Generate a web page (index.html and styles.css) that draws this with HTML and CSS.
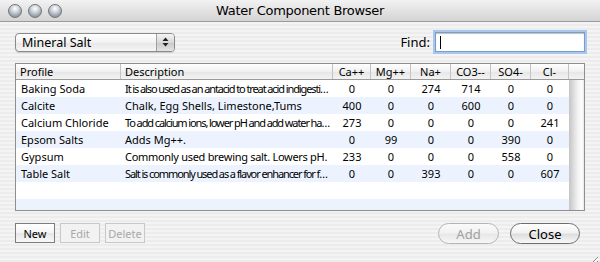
FILE: index.html
```html
<!DOCTYPE html>
<html>
<head>
<meta charset="utf-8">
<link rel="stylesheet" href="styles.css">
</head>
<body>
<div class="window">
  <div class="titlebar">
    <div class="lights">
      <span class="light"></span><span class="light"></span><span class="light"></span>
    </div>
    <div class="title">Water Component Browser</div>
  </div>
  <div class="content">
    <div class="toolbar">
      <div class="popup">
        <span class="popup-label">Mineral Salt</span>
        <span class="popup-arrows">
          <svg width="7" height="10" viewBox="0 0 7 10"><path d="M3.5 0.5 L6.5 4 H0.5 Z M3.5 9.5 L6.5 6 H0.5 Z" fill="#222"/></svg>
        </span>
      </div>
      <div class="find">
        <span class="find-label">Find:</span>
        <div class="find-input"><span class="caret"></span></div>
      </div>
    </div>
    <div class="table">
      <div class="thead">
        <div class="th c-prof">Profile</div>
        <div class="th c-desc">Description</div>
        <div class="th c-n c1">Ca++</div>
        <div class="th c-n c2">Mg++</div>
        <div class="th c-n c3">Na+</div>
        <div class="th c-n c4">CO3--</div>
        <div class="th c-n c5">SO4-</div>
        <div class="th c-n c6">Cl-</div>
        <div class="th c-corner"></div>
      </div>
      <div class="tbody">
        <div class="rows">
          <div class="row">
            <div class="td c-prof">Baking Soda</div>
            <div class="td c-desc narrow">It is also used as an antacid to treat acid indigestion and heartburn</div>
            <div class="td c-n c1">0</div><div class="td c-n c2">0</div><div class="td c-n c3">274</div><div class="td c-n c4">714</div><div class="td c-n c5">0</div><div class="td c-n c6">0</div>
          </div>
          <div class="row alt">
            <div class="td c-prof">Calcite</div>
            <div class="td c-desc">Chalk, Egg Shells, Limestone,Tums</div>
            <div class="td c-n c1">400</div><div class="td c-n c2">0</div><div class="td c-n c3">0</div><div class="td c-n c4">600</div><div class="td c-n c5">0</div><div class="td c-n c6">0</div>
          </div>
          <div class="row">
            <div class="td c-prof">Calcium Chloride</div>
            <div class="td c-desc narrow">To add calcium ions, lower pH and add water hardness</div>
            <div class="td c-n c1">273</div><div class="td c-n c2">0</div><div class="td c-n c3">0</div><div class="td c-n c4">0</div><div class="td c-n c5">0</div><div class="td c-n c6">241</div>
          </div>
          <div class="row alt">
            <div class="td c-prof">Epsom Salts</div>
            <div class="td c-desc">Adds Mg++.</div>
            <div class="td c-n c1">0</div><div class="td c-n c2">99</div><div class="td c-n c3">0</div><div class="td c-n c4">0</div><div class="td c-n c5">390</div><div class="td c-n c6">0</div>
          </div>
          <div class="row">
            <div class="td c-prof">Gypsum</div>
            <div class="td c-desc tight">Commonly used brewing salt. Lowers pH.</div>
            <div class="td c-n c1">233</div><div class="td c-n c2">0</div><div class="td c-n c3">0</div><div class="td c-n c4">0</div><div class="td c-n c5">558</div><div class="td c-n c6">0</div>
          </div>
          <div class="row alt">
            <div class="td c-prof">Table Salt</div>
            <div class="td c-desc narrow">Salt is commonly used as a flavor enhancer for food</div>
            <div class="td c-n c1">0</div><div class="td c-n c2">0</div><div class="td c-n c3">393</div><div class="td c-n c4">0</div><div class="td c-n c5">0</div><div class="td c-n c6">607</div>
          </div>
          <div class="row empty"></div>
          <div class="row alt empty short"></div>
        </div>
        <div class="scrollbar"></div>
      </div>
    </div>
    <div class="bottom">
      <div class="left-buttons">
        <button class="sq">New</button>
        <button class="sq disabled">Edit</button>
        <button class="sq disabled">Delete</button>
      </div>
      <div class="right-buttons">
        <button class="pill disabled">Add</button>
        <button class="pill">Close</button>
      </div>
    </div>
    <div class="grip">
      <svg width="12" height="12" viewBox="0 0 12 12"><path d="M11 3 L3 11 M11 7 L7 11" stroke="#8a8a8a" stroke-width="1"/><path d="M11.5 4 L4 11.5 M11.5 8 L8 11.5" stroke="#fff" stroke-width="1"/></svg>
    </div>
  </div>
</div>
</body>
</html>
```
FILE: styles.css
```css
* { box-sizing: border-box; }
html, body { margin: 0; padding: 0; }
body {
  width: 600px;
  height: 262px;
  overflow: hidden;
  font-family: "Noto Sans", "DejaVu Sans", sans-serif;
  color: #000;
}
.window {
  width: 600px;
  height: 262px;
  display: flex;
  flex-direction: column;
  background: repeating-linear-gradient(to bottom, #ececec 0px, #ececec 2px, #f4f4f4 2px, #f4f4f4 4px);
}
.titlebar {
  height: 22px;
  flex: none;
  position: relative;
  display: flex;
  align-items: center;
  background: linear-gradient(to bottom, #f2f2f2, #d4d4d4);
  border-bottom: 1px solid #9a9a9a;
}
.lights {
  display: flex;
  gap: 6px;
  padding-left: 8px;
}
.light {
  width: 14px;
  height: 14px;
  border-radius: 50%;
  background: radial-gradient(circle at 50% 30%, #ffffff 0%, #d8dde2 30%, #9aa2ab 70%, #7d848c 100%);
  border: 1px solid #6f767e;
}
.title {
  position: absolute;
  left: 0;
  right: 0;
  top: 0;
  height: 21px;
  line-height: 21px;
  text-align: center;
  font-family: "DejaVu Sans", sans-serif;
  font-size: 13px;
  letter-spacing: -0.3px;
  pointer-events: none;
}
.content {
  flex: 1;
  position: relative;
  padding: 10px 15px 0 15px;
  display: flex;
  flex-direction: column;
}
.toolbar {
  display: flex;
  justify-content: space-between;
  align-items: center;
  height: 20px;
}
.popup {
  width: 160px;
  height: 19px;
  display: flex;
  border: 1px solid #8a8a8a;
  border-radius: 4px;
  background: linear-gradient(to bottom, #ffffff, #f2f2f2 50%, #e6e6e6 51%, #f6f6f6);
  box-shadow: 0 1px 1px rgba(0,0,0,0.15);
  overflow: hidden;
}
.popup-label {
  flex: 1;
  font-size: 12.5px;
  line-height: 17px;
  padding-left: 6px;
}
.popup-arrows {
  width: 18px;
  border-left: 1px solid #a0a0a0;
  display: flex;
  align-items: center;
  justify-content: center;
  background: linear-gradient(to bottom, #f4f4f4, #d8d8d8 50%, #c8c8c8 51%, #e4e4e4);
}
.find {
  display: flex;
  align-items: center;
  gap: 5px;
}
.find-label {
  font-size: 13px;
}
.find-input {
  width: 150px;
  height: 20px;
  background: #fff;
  border: 1px solid #7a9cc8;
  box-shadow: 0 0 0 2px #a9c6ec, inset 0 1px 1px rgba(0,0,0,0.25);
  padding: 3px 0 0 4px;
}
.caret {
  display: block;
  width: 1px;
  height: 13px;
  background: #000;
}
.table {
  margin-top: 11px;
  width: 570px;
  height: 148px;
  border: 1px solid #8e8e8e;
  background: #fff;
  display: flex;
  flex-direction: column;
}
.thead {
  height: 16px;
  display: flex;
  background: linear-gradient(to bottom, #ffffff, #f0f0f0 50%, #e6e6e6 51%, #f3f3f3);
  border-bottom: 1px solid #9a9a9a;
  flex: none;
}
.th {
  font-size: 11px;
  line-height: 15px;
  border-right: 1px solid #c4c4c4;
  padding-left: 4px;
  white-space: nowrap;
  overflow: hidden;
}
.th.c-n { text-align: center; padding-left: 0; }
.c-prof { width: 105px; flex: none; }
.c-desc { width: 212px; flex: none; }
.c1 { width: 38px; flex: none; }
.c2 { width: 40px; flex: none; }
.c3 { width: 40px; flex: none; }
.c4 { width: 40px; flex: none; }
.c5 { width: 40px; flex: none; }
.c6 { width: 38px; flex: none; }
.c-corner { flex: 1; border-right: none; }
.tbody {
  flex: 1;
  display: flex;
  min-height: 0;
}
.rows {
  width: 553px;
  display: flex;
  flex-direction: column;
  overflow: hidden;
}
.row {
  height: 17px;
  display: flex;
  flex: none;
  background: #fff;
}
.row.alt { background: #edf3fe; }
.row.short { flex: 1; height: auto; }
.td {
  font-size: 11px;
  line-height: 17px;
  padding-left: 5px;
  white-space: nowrap;
  overflow: hidden;
  text-overflow: ellipsis;
}
.td.c-n { text-align: center; padding-left: 0; }
.td.c-desc { padding-right: 2px; padding-left: 4px; }
.narrow { letter-spacing: -1.1px; }
.tight { letter-spacing: -0.3px; }
.scrollbar {
  flex: 1;
  border-left: 1px solid #c8c8c8;
  background: linear-gradient(to right, #c9c9c9, #e4e4e4 35%, #f4f4f4 60%, #fdfdfd 85%, #e8e8e8);
}
.bottom {
  display: flex;
  justify-content: space-between;
  margin-top: 12px;
  height: 21px;
}
.left-buttons { display: flex; gap: 5px; }
.right-buttons { display: flex; gap: 11px; padding-right: 5px; }
button {
  font-family: "Noto Sans", "DejaVu Sans", sans-serif;
  margin: 0;
  padding: 0;
  cursor: default;
}
.sq {
  width: 40px;
  height: 20px;
  font-size: 11px;
  border: 1px solid #7c7c7c;
  background: linear-gradient(to bottom, #ffffff, #f4f4f4 50%, #e6e6e6 51%, #f8f8f8);
  color: #000;
}
.sq.disabled {
  border-color: #c8c8c8;
  color: #a8a8a8;
  background: #f2f2f2;
}
.pill {
  height: 21px;
  width: 70px;
  font-size: 13px;
  border-radius: 11px;
  border: 1px solid #6e6e6e;
  background: linear-gradient(to bottom, #ffffff, #f2f2f2 45%, #dedede 55%, #f8f8f8);
  color: #000;
}
.pill.disabled {
  width: 61px;
  border-color: #b4b4b4;
  color: #a0a0a0;
  background: linear-gradient(to bottom, #fafafa, #f2f2f2 45%, #e8e8e8 55%, #f6f6f6);
}
.grip {
  position: absolute;
  right: 1px;
  bottom: 1px;
  width: 12px;
  height: 12px;
}
```
